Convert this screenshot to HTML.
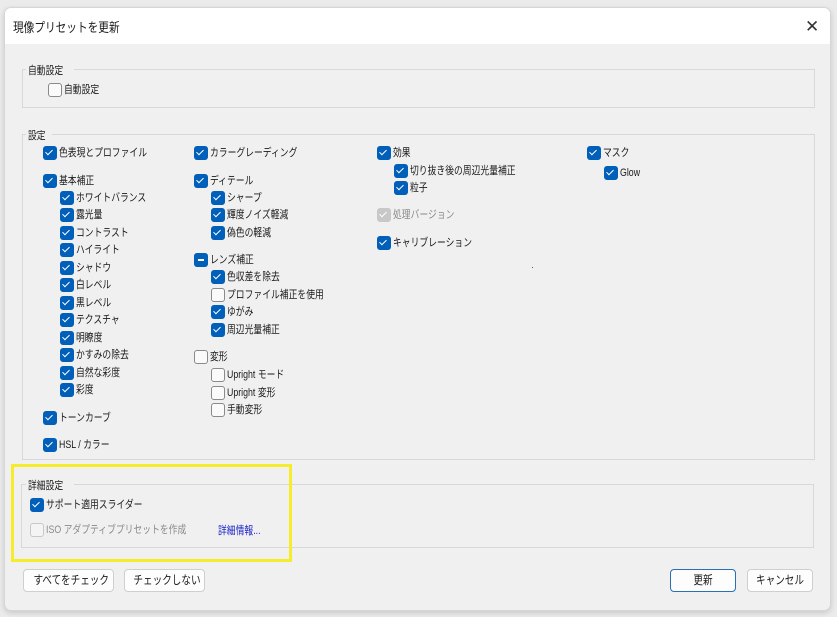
<!DOCTYPE html>
<html><head><meta charset="utf-8"><style>
body{margin:0;width:837px;height:617px;background:#ebebeb;position:relative;overflow:hidden;font-family:"Liberation Sans","Noto Sans CJK JP",sans-serif;font-size:11px;color:#1a1a1a}
.win{position:absolute;left:4px;top:7px;width:825px;height:602px;background:#f0f0f0;border:1px solid #d6d6d6;border-radius:7px;box-shadow:0 2px 6px rgba(0,0,0,.15);overflow:hidden}
.title{position:absolute;left:0;top:0;right:0;height:36px;background:#fff}
.title span{position:absolute;left:8px;top:9px;font-size:13px;transform:scaleX(.82);transform-origin:left}
.x{position:absolute;left:800px;top:9px;font-size:17px;color:#333}
.gb{position:absolute;border:1px solid #d8d8d8}
.lg{position:absolute;background:#f0f0f0;padding:0 2px;font-size:11px;white-space:nowrap}
.lg span,.i span.t{display:inline-block;transform:scaleX(.8);transform-origin:left}
.i{position:absolute;white-space:nowrap;line-height:14px}
.c{display:inline-block;width:12px;height:12px;border-radius:3px;background:#005fb8;border:1px solid #005fb8;vertical-align:top;margin-right:2px;position:relative}
.c::after{content:"";position:absolute;left:3px;top:1px;width:3px;height:6px;border:solid #fff;border-width:0 1.3px 1.3px 0;transform:rotate(45deg)}
.u{background:#fafafa;border-color:#8a8a8a}
.u::after{display:none}
.m::after{left:3px;top:5px;width:6px;height:0;border-width:0 0 2px 0;transform:none}
.d{background:#c8c8c8;border-color:#c8c8c8}
.du{background:#f4f4f4;border-color:#c8c8c8}
.du::after{display:none}
.g{color:#8a8a8a}
.btn{position:absolute;top:561px;height:21px;border:1px solid #cfcfcf;border-radius:4px;background:#fdfdfd;text-align:center;line-height:21px;font-size:12px;white-space:nowrap;overflow:hidden}
.btn span{display:inline-block;transform:scaleX(.8)}
</style></head><body>
<div class="win">
<div class="title"><span>現像プリセットを更新</span><div class="x">✕</div></div>
<div class="gb" style="left:17px;top:61px;width:791px;height:37px"></div>
<div class="lg" style="left:21px;top:54px"><span>自動設定</span></div>
<div class="i" style="left:43px;top:75px"><span class="c u"></span><span class="t">自動設定</span></div>
<div class="gb" style="left:17px;top:126px;width:791px;height:324px"></div>
<div class="lg" style="left:21px;top:119px"><span>設定</span></div>
</div>
<div class="i" style="left:43px;top:146px"><span class="c"></span><span class="t">色表現とプロファイル</span></div>
<div class="i" style="left:43px;top:174px"><span class="c"></span><span class="t">基本補正</span></div>
<div class="i" style="left:60px;top:191px"><span class="c"></span><span class="t">ホワイトバランス</span></div>
<div class="i" style="left:60px;top:208px"><span class="c"></span><span class="t">露光量</span></div>
<div class="i" style="left:60px;top:226px"><span class="c"></span><span class="t">コントラスト</span></div>
<div class="i" style="left:60px;top:243px"><span class="c"></span><span class="t">ハイライト</span></div>
<div class="i" style="left:60px;top:261px"><span class="c"></span><span class="t">シャドウ</span></div>
<div class="i" style="left:60px;top:278px"><span class="c"></span><span class="t">白レベル</span></div>
<div class="i" style="left:60px;top:296px"><span class="c"></span><span class="t">黒レベル</span></div>
<div class="i" style="left:60px;top:313px"><span class="c"></span><span class="t">テクスチャ</span></div>
<div class="i" style="left:60px;top:331px"><span class="c"></span><span class="t">明瞭度</span></div>
<div class="i" style="left:60px;top:348px"><span class="c"></span><span class="t">かすみの除去</span></div>
<div class="i" style="left:60px;top:366px"><span class="c"></span><span class="t">自然な彩度</span></div>
<div class="i" style="left:60px;top:383px"><span class="c"></span><span class="t">彩度</span></div>
<div class="i" style="left:43px;top:411px"><span class="c"></span><span class="t">トーンカーブ</span></div>
<div class="i" style="left:43px;top:438px"><span class="c"></span><span class="t">HSL / カラー</span></div>

<div class="i" style="left:194px;top:146px"><span class="c"></span><span class="t">カラーグレーディング</span></div>
<div class="i" style="left:194px;top:174px"><span class="c"></span><span class="t">ディテール</span></div>
<div class="i" style="left:211px;top:191px"><span class="c"></span><span class="t">シャープ</span></div>
<div class="i" style="left:211px;top:208px"><span class="c"></span><span class="t">輝度ノイズ軽減</span></div>
<div class="i" style="left:211px;top:226px"><span class="c"></span><span class="t">偽色の軽減</span></div>
<div class="i" style="left:194px;top:253px"><span class="c m"></span><span class="t">レンズ補正</span></div>
<div class="i" style="left:211px;top:270px"><span class="c"></span><span class="t">色収差を除去</span></div>
<div class="i" style="left:211px;top:288px"><span class="c u"></span><span class="t">プロファイル補正を使用</span></div>
<div class="i" style="left:211px;top:305px"><span class="c"></span><span class="t">ゆがみ</span></div>
<div class="i" style="left:211px;top:323px"><span class="c"></span><span class="t">周辺光量補正</span></div>
<div class="i" style="left:194px;top:350px"><span class="c u"></span><span class="t">変形</span></div>
<div class="i" style="left:211px;top:368px"><span class="c u"></span><span class="t">Upright モード</span></div>
<div class="i" style="left:211px;top:386px"><span class="c u"></span><span class="t">Upright 変形</span></div>
<div class="i" style="left:211px;top:403px"><span class="c u"></span><span class="t">手動変形</span></div>

<div class="i" style="left:377px;top:146px"><span class="c"></span><span class="t">効果</span></div>
<div class="i" style="left:394px;top:164px"><span class="c"></span><span class="t">切り抜き後の周辺光量補正</span></div>
<div class="i" style="left:394px;top:181px"><span class="c"></span><span class="t">粒子</span></div>
<div class="i g" style="left:377px;top:208px"><span class="c d"></span><span class="t">処理バージョン</span></div>
<div class="i" style="left:377px;top:236px"><span class="c"></span><span class="t">キャリブレーション</span></div>

<div class="i" style="left:587px;top:146px"><span class="c"></span><span class="t">マスク</span></div>
<div class="i" style="left:604px;top:166px"><span class="c"></span><span class="t">Glow</span></div>
<div style="position:absolute;left:532px;top:267px;width:1px;height:1px;background:#555"></div>

<div class="gb" style="left:21px;top:484px;width:791px;height:62px"></div>
<div class="lg" style="left:26px;top:477px"><span>詳細設定</span></div>
<div class="i" style="left:30px;top:498px"><span class="c"></span><span class="t">サポート適用スライダー</span></div>
<div class="i g" style="left:30px;top:523px"><span class="c du"></span><span class="t">ISO アダプティブプリセットを作成</span></div>
<div class="i" style="left:218px;top:524px;color:#1a23c8"><span class="t">詳細情報...</span></div>
<div style="position:absolute;left:11px;top:464px;width:275px;height:92px;border:3px solid #f7ec2c"></div>

<div class="btn" style="left:23px;top:569px;width:89px"><span>すべてをチェック</span></div>
<div class="btn" style="left:124px;top:569px;width:79px"><span>チェックしない</span></div>
<div class="btn" style="left:670px;top:569px;width:64px;border-color:#2a70b8"><span>更新</span></div>
<div class="btn" style="left:747px;top:569px;width:64px"><span>キャンセル</span></div>
</body></html>
